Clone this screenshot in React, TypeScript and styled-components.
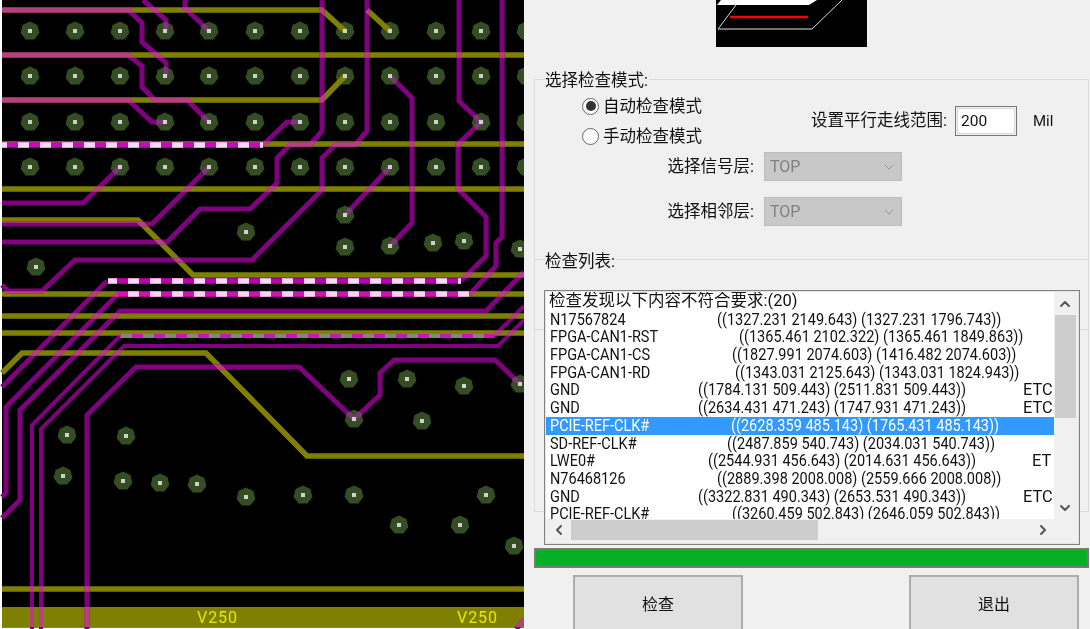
import React from "react";
import styled, { createGlobalStyle } from "styled-components";
import { ChevronUp, ChevronDown, ChevronLeft, ChevronRight } from "lucide-react";

const Global = createGlobalStyle`
  html, body { margin: 0; padding: 0; background: #fff; overflow: hidden; }
  body { font-family: Roboto, "Noto Sans CJK SC", sans-serif; }
`;

const Root = styled.div`
  display: flex;
  width: 1090px;
  height: 629px;
  overflow: hidden;
`;

const Board = styled.svg`
  display: block;
  flex: none;
  width: 524px;
  height: 629px;
  filter: blur(0.5px);
`;

const Dialog = styled.div`
  flex: none;
  width: 566px;
  height: 629px;
  background: #f0f0f0;
  color: #111;
  font-size: 16.5px;
  line-height: 18px;
  filter: blur(0.45px);
`;

const Preview = styled.svg`
  display: block;
  width: 151px;
  height: 47px;
  margin-left: 192px;
`;

const GroupBox = styled.div<{ $height: number; $mt: number; $mb: number; $pt: number }>`
  position: relative;
  box-sizing: border-box;
  width: 555px;
  height: ${(p) => p.$height}px;
  margin: ${(p) => p.$mt}px 0 ${(p) => p.$mb}px 10px;
  padding-top: ${(p) => p.$pt}px;
  border: 1px solid #dcdcdc;
`;

const Legend = styled.span<{ $top: number }>`
  position: absolute;
  top: ${(p) => p.$top}px;
  left: 10px;
  padding: 0 1px 0 0;
  background: #f0f0f0;
  line-height: 18px;
`;

const ModeRow = styled.div`
  display: flex;
  align-items: center;
  padding-left: 47px;
`;

const RadioColumn = styled.div`
  width: 229px;
`;

const RadioRow = styled.div`
  display: flex;
  align-items: center;
  gap: 4px;
  height: 30px;
`;

const RadioText = styled.span`
  padding-top: 2px;
`;

const RadioMark = styled.span<{ $on?: boolean }>`
  box-sizing: border-box;
  display: flex;
  align-items: center;
  justify-content: center;
  width: 17px;
  height: 17px;
  border: 1.5px solid #666;
  border-radius: 50%;
  background: #fff;
  &::after {
    content: "";
    display: ${(p) => (p.$on ? "block" : "none")};
    width: 10px;
    height: 10px;
    border-radius: 50%;
    background: #333;
  }
`;

const RangeGroup = styled.div`
  display: flex;
  align-items: center;
`;

const RangeLabel = styled.span`
  width: 136px;
  white-space: nowrap;
`;

const RangeInput = styled.div`
  box-sizing: border-box;
  width: 62px;
  height: 30px;
  margin-left: 8px;
  margin-right: 16px;
  padding: 4px 5px;
  border: 1px solid #777;
  background: #fff;
  font-size: 15.5px;
  line-height: 20px;
  box-shadow: inset 0 0 0 1px #f0f0f0, inset 0 0 0 2px #d8d8d8;
`;

const MilLabel = styled.span`
  font-size: 15px;
`;

const SelectRow = styled.div<{ $mt: number }>`
  display: grid;
  grid-template-columns: 219px 138px;
  column-gap: 10px;
  align-items: center;
  margin-top: ${(p) => p.$mt}px;
  text-align: right;
`;

const SelectBox = styled.div`
  box-sizing: border-box;
  display: flex;
  align-items: center;
  justify-content: space-between;
  height: 29px;
  padding: 0 4px 0 5px;
  background: #c8c8c8;
  border: 1px solid #bcbcbc;
  color: #808080;
  font-size: 16px;
  text-align: left;
`;

const ListFrame = styled.div`
  box-sizing: border-box;
  display: grid;
  grid-template-columns: 1fr 22px;
  grid-template-rows: 1fr 21px;
  width: 536px;
  height: 255px;
  margin-left: 9px;
  border: 1px solid #828282;
  box-shadow: inset 0 0 0 1px #e4e4e4;
  padding: 1px 3px 4px 1px;
  background: #f0f0f0;
  font-size: 16.4px;
`;

const ListContent = styled.div`
  background: #fff;
  overflow: hidden;
`;

const ListHeader = styled.div`
  height: 18.7px;
  padding-left: 3px;
  font-size: 16.5px;
  line-height: 18px;
  white-space: nowrap;
`;

const ListRow = styled.div<{ $coord: number; $tail?: number; $sel?: boolean }>`
  display: grid;
  grid-template-columns: ${(p) => p.$coord - 550}px ${(p) => (p.$tail ? `${p.$tail - p.$coord}px auto` : "1fr")};
  height: 17.7px;
  padding-left: 4px;
  line-height: 17.7px;
  white-space: nowrap;
  background: ${(p) => (p.$sel ? "#3399ff" : "transparent")};
  color: ${(p) => (p.$sel ? "#fff" : "#111")};
`;

const Condensed = styled.span`
  display: block;
  transform: scaleX(0.885);
  transform-origin: left center;
`;

const VScroll = styled.div`
  display: flex;
  flex-direction: column;
  align-items: center;
  color: #555;
`;

const ArrowSlot = styled.div<{ $w?: number; $h?: number }>`
  flex: none;
  display: flex;
  align-items: center;
  justify-content: center;
  width: ${(p) => p.$w ?? 22}px;
  height: ${(p) => p.$h ?? 22}px;
`;

const VThumb = styled.div`
  width: 21px;
  height: 103px;
  background: #cdcdcd;
`;

const Spacer = styled.div`
  flex: 1;
`;

const HScroll = styled.div`
  display: flex;
  align-items: center;
  height: 21px;
  color: #555;
`;

const HThumb = styled.div`
  width: 247px;
  height: 20px;
  background: #cdcdcd;
`;

const Corner = styled.div`
  background: #f0f0f0;
`;

const Progress = styled.div`
  box-sizing: border-box;
  width: 555px;
  height: 20px;
  margin-left: 10px;
  border: 2px solid #7a7a7a;
  background: #e6e6e6;
`;

const ProgressFill = styled.div`
  height: 100%;
  background: #06b025;
`;

const ButtonRow = styled.div`
  display: flex;
  gap: 166px;
  margin-top: 7px;
  padding-left: 49px;
`;

const ActionButton = styled.div`
  box-sizing: border-box;
  display: flex;
  align-items: center;
  justify-content: center;
  width: 170px;
  height: 58px;
  padding-top: 2px;
  background: #e1e1e1;
  border: 2px solid #adadad;
  font-size: 16px;
`;

const OLIVE = "#808000";
const MAG = "#800080";
const PINK = "#b8407f";

type P = { d: string; w: number };
const olive: P[] = [
  { d: "M2 10H322L345 31", w: 5.5 },
  { d: "M367 10L390 31", w: 5.5 },
  { d: "M2 55H524", w: 5.5 },
  { d: "M2 100H322L345 76", w: 5.5 },
  { d: "M2 144H524", w: 5.5 },
  { d: "M2 189H524", w: 5.5 },
  { d: "M2 220H138L193 275H524", w: 5.5 },
  { d: "M2 294H118M469 294H524", w: 5.5 },
  { d: "M2 316H524", w: 5.5 },
  { d: "M2 333H524", w: 5.5 },
  { d: "M2 373L22 353H206L307 456H524", w: 5.5 },
  { d: "M2 589H524", w: 5.5 },
  { d: "M2 617H524", w: 20 },
];
const magenta: P[] = [
  { d: "M2 10H128L142 23V42L166 63V76", w: 5 },
  { d: "M143 0L166 20V31", w: 5 },
  { d: "M185 0V8L209 31", w: 5 },
  { d: "M2 55H128L142 66V87L155 100H187L209 122", w: 5 },
  { d: "M2 100H128L152 122H166", w: 5 },
  { d: "M263 145L287 122H300", w: 5 },
  { d: "M2 203H83L120 167", w: 5 },
  { d: "M2 224H152L209 167", w: 5 },
  { d: "M2 242H167L200 209H250L277 183V158L290 145H310L322 131V0", w: 5 },
  { d: "M2 285L8 291H42L75 260H252L302 210L322 190V158L335 145H355L367 131V0", w: 5 },
  { d: "M390 167L345 215", w: 5 },
  { d: "M390 76L412 98V223L390 246", w: 5 },
  { d: "M459 0V101L481 122L458 144V189L486 217V256L461 281", w: 5 },
  { d: "M502 0V237L496 243V266L470 294", w: 5 },
  { d: "M107 281L2 387", w: 5 },
  { d: "M118 294L6 407V493L2 497", w: 5 },
  { d: "M2 518L20 500V410L120 311H486L524 272", w: 5 },
  { d: "M32 629V425L120 336H494L524 306", w: 4 },
  { d: "M41 629V429L124 346H498L524 320", w: 4 },
  { d: "M87 629V415L136 367H299L354 419L380 395V373L394 360H495L520 384", w: 5 },
  { d: "M516 629L524 620", w: 5 },
];

const vias: [number, number][] = [
  ...[31, 76, 122, 167].flatMap((y) =>
    [30, 75, 120, 165, 209, 255, 300, 345, 390, 436, 481, 526].map((x): [number, number] => [x, y])
  ),
  [246, 232], [36, 267], [345, 215], [345, 247], [390, 246], [433, 243], [464, 241], [520, 249],
  [349, 379], [407, 379], [464, 386], [520, 384], [354, 419], [422, 421],
  [67, 435], [126, 436], [63, 476], [123, 481], [160, 483], [197, 484], [246, 497],
  [303, 495], [354, 495], [399, 525], [460, 525], [486, 495], [514, 546],
];

const viaPts = (x: number, y: number) => {
  const pts: string[] = [];
  for (let i = 0; i < 14; i++) {
    const r = i % 2 === 0 ? 9.6 : 8.6;
    const a = (i * Math.PI) / 7 - Math.PI / 2;
    pts.push(`${(x + r * Math.cos(a)).toFixed(1)},${(y + r * Math.sin(a)).toFixed(1)}`);
  }
  return pts.join(" ");
};

type Dash = { y: number; x1: number; x2: number; off: number; a: string; b: string; w: number };
const dashes: Dash[] = [
  { y: 145, x1: 2, x2: 263, off: 6, a: "#c60cb4", b: "#f8d8f2", w: 5.5 },
  { y: 281, x1: 108, x2: 461, off: 2, a: "#c000b0", b: "#f8d8f2", w: 5.5 },
  { y: 294, x1: 118, x2: 470, off: 12, a: "#d810b4", b: "#f8d4f0", w: 5.5 },
  { y: 336, x1: 120, x2: 494, off: 21, a: "#d010c4", b: "#7f8c6c", w: 4 },
];

const PcbDrawing = () => (
  <Board viewBox="0 0 524 629">
    <defs>
      <mask id="magMask" maskUnits="userSpaceOnUse" x="0" y="0" width="524" height="629">
        <rect x="0" y="0" width="524" height="629" fill="#000" />
        {magenta.map((m, i) => (
          <path key={i} d={m.d} stroke="#fff" strokeWidth={m.w} fill="none" />
        ))}
      </mask>
    </defs>
    <rect x="2" y="0" width="522" height="627.5" fill="#000" />
    <g fill="#344d22">
      {vias.map(([x, y], i) => (
        <polygon key={i} points={viaPts(x, y)} />
      ))}
    </g>
    <g fill="none" stroke={OLIVE}>
      {olive.map((o, i) => (
        <path key={i} d={o.d} strokeWidth={o.w} />
      ))}
    </g>
    <g fill="none" stroke={MAG}>
      {magenta.map((m, i) => (
        <path key={i} d={m.d} strokeWidth={m.w} />
      ))}
    </g>
    <g mask="url(#magMask)">
      <g fill="none" stroke={PINK}>
        {olive.map((o, i) => (
          <path key={i} d={o.d} strokeWidth={o.w} />
        ))}
      </g>
      <g fill="#70406a">
        {vias.map(([x, y], i) => (
          <polygon key={i} points={viaPts(x, y)} />
        ))}
      </g>
    </g>
    {dashes.map((d) => (
      <g key={d.y}>
        <line x1={d.x1} x2={d.x2} y1={d.y} y2={d.y} stroke={d.a} strokeWidth={d.w} />
        <line
          x1={d.x1}
          x2={d.x2}
          y1={d.y}
          y2={d.y}
          stroke={d.b}
          strokeWidth={d.w}
          strokeDasharray="11 11"
          strokeDashoffset={d.off}
        />
      </g>
    ))}
    <g fill="#cfcfcf">
      {vias.map(([x, y], i) => (
        <rect key={i} x={x - 2} y={y - 2} width="4" height="4" />
      ))}
    </g>
    <g fill="#e6e600" fontFamily="Roboto, sans-serif" fontSize="16">
      <text x="197" y="623" textLength="40">V250</text>
      <text x="457" y="623" textLength="40">V250</text>
    </g>
  </Board>
);

const PreviewDrawing = () => (
  <Preview viewBox="0 0 151 47">
    <rect width="151" height="47" fill="#000" />
    <path d="M1 5L5 0H101L93 5Z" fill="#fff" />
    <path d="M20 5L2 29H96L126 0" fill="none" stroke="#ddd" strokeWidth="1" />
    <path d="M14 17H92" stroke="#f00" strokeWidth="2.5" />
  </Preview>
);

const rows: { n: string; c: string; x: number; t?: string; tx?: number; sel?: boolean }[] = [
  { n: "N17567824", c: "((1327.231 2149.643) (1327.231 1796.743))", x: 717 },
  { n: "FPGA-CAN1-RST", c: "((1365.461 2102.322) (1365.461 1849.863))", x: 739 },
  { n: "FPGA-CAN1-CS", c: "((1827.991 2074.603) (1416.482 2074.603))", x: 732 },
  { n: "FPGA-CAN1-RD", c: "((1343.031 2125.643) (1343.031 1824.943))", x: 735 },
  { n: "GND", c: "((1784.131 509.443) (2511.831 509.443))", x: 698, t: "ETC", tx: 1023 },
  { n: "GND", c: "((2634.431 471.243) (1747.931 471.243))", x: 698, t: "ETC", tx: 1023 },
  { n: "PCIE-REF-CLK#", c: "((2628.359 485.143) (1765.431 485.143))", x: 731, sel: true },
  { n: "SD-REF-CLK#", c: "((2487.859 540.743) (2034.031 540.743))", x: 727 },
  { n: "LWE0#", c: "((2544.931 456.643) (2014.631 456.643))", x: 708, t: "ET", tx: 1032 },
  { n: "N76468126", c: "((2889.398 2008.008) (2559.666 2008.008))", x: 717 },
  { n: "GND", c: "((3322.831 490.343) (2653.531 490.343))", x: 698, t: "ETC", tx: 1023 },
  { n: "PCIE-REF-CLK#", c: "((3260.459 502.843) (2646.059 502.843))", x: 732 },
];

export default function App() {
  return (
    <Root>
      <Global />
      <PcbDrawing />
      <Dialog>
        <PreviewDrawing />
        <GroupBox $height={251} $mt={32} $mb={-71} $pt={11}>
          <Legend $top={-8}>选择检查模式:</Legend>
          <ModeRow>
            <RadioColumn>
              <RadioRow>
                <RadioMark $on />
                <RadioText>自动检查模式</RadioText>
              </RadioRow>
              <RadioRow>
                <RadioMark />
                <RadioText>手动检查模式</RadioText>
              </RadioRow>
            </RadioColumn>
            <RangeGroup>
              <RangeLabel>设置平行走线范围:</RangeLabel>
              <RangeInput>200</RangeInput>
              <MilLabel>Mil</MilLabel>
            </RangeGroup>
          </ModeRow>
          <SelectRow $mt={1}>
            选择信号层:
            <SelectBox>
              TOP
              <ChevronDown size={16} strokeWidth={1.2} color="#888" />
            </SelectBox>
          </SelectRow>
          <SelectRow $mt={16}>
            选择相邻层:
            <SelectBox>
              TOP
              <ChevronDown size={16} strokeWidth={1.2} color="#888" />
            </SelectBox>
          </SelectRow>
        </GroupBox>
        <GroupBox $height={253} $mt={0} $mb={36} $pt={30}>
          <Legend $top={-7}>检查列表:</Legend>
          <ListFrame>
            <ListContent>
              <ListHeader>检查发现以下内容不符合要求:(20)</ListHeader>
              {rows.map((r, i) => (
                <ListRow key={i} $coord={r.x} $tail={r.tx} $sel={r.sel}>
                  <Condensed>{r.n}</Condensed>
                  <Condensed>{r.c}</Condensed>
                  {r.t && <span>{r.t}</span>}
                </ListRow>
              ))}
            </ListContent>
            <VScroll>
              <ArrowSlot $h={23}>
                <ChevronUp size={16} strokeWidth={3} />
              </ArrowSlot>
              <VThumb />
              <Spacer />
              <ArrowSlot>
                <ChevronDown size={16} strokeWidth={3} />
              </ArrowSlot>
            </VScroll>
            <HScroll>
              <ArrowSlot $w={25} $h={21}>
                <ChevronLeft size={16} strokeWidth={3} />
              </ArrowSlot>
              <HThumb />
              <Spacer />
              <ArrowSlot $h={21}>
                <ChevronRight size={16} strokeWidth={3} />
              </ArrowSlot>
            </HScroll>
            <Corner />
          </ListFrame>
        </GroupBox>
        <Progress>
          <ProgressFill />
        </Progress>
        <ButtonRow>
          <ActionButton>检查</ActionButton>
          <ActionButton>退出</ActionButton>
        </ButtonRow>
      </Dialog>
    </Root>
  );
}
